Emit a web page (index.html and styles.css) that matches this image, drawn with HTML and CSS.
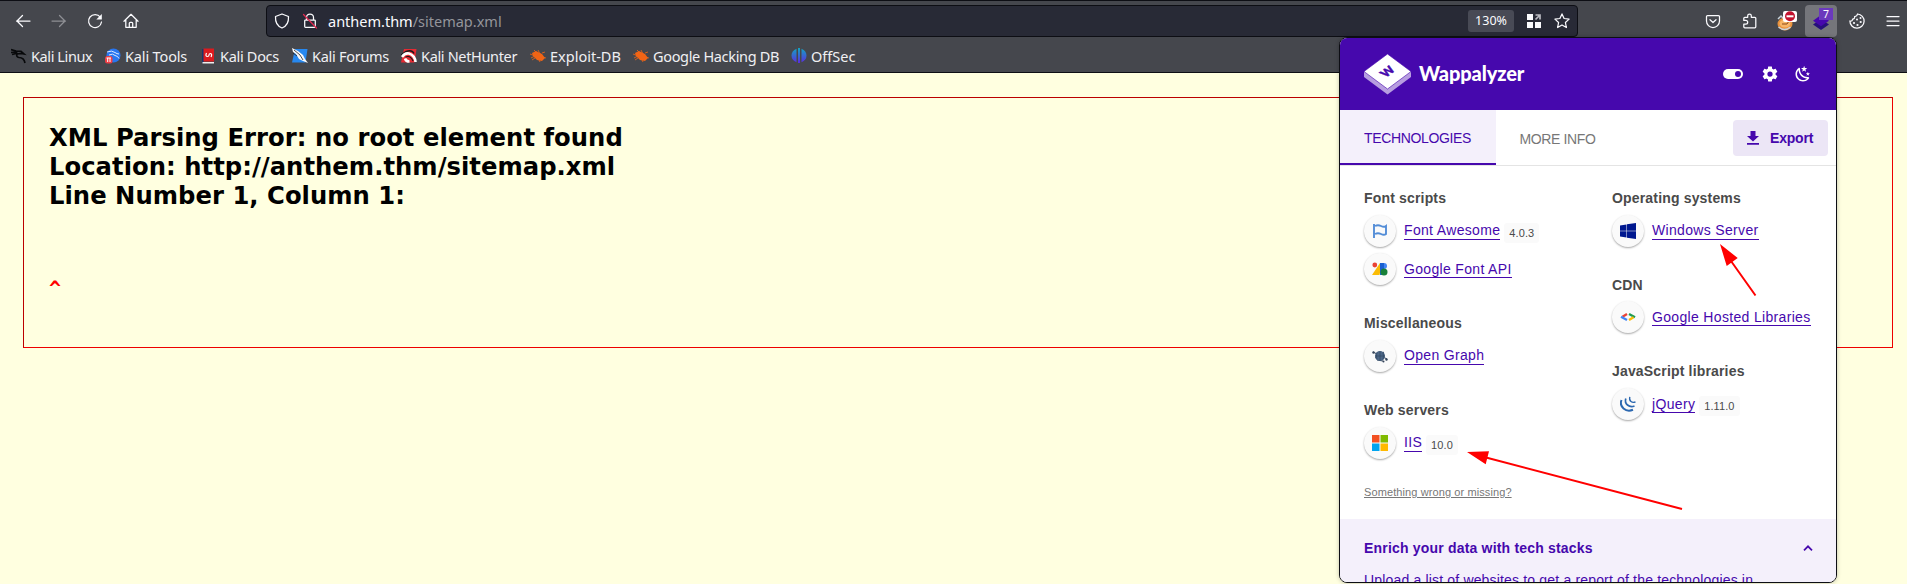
FILE: index.html
```html
<!DOCTYPE html>
<html lang="en">
<head>
<meta charset="utf-8">
<title>sitemap.xml</title>
<link rel="stylesheet" href="styles.css">
</head>
<body>
<div class="chrome">
  <div class="navbar">
    <div class="nav-buttons">
      <svg class="ic" viewBox="0 0 16 16"><path d="M15 8H1.500M7.500 2.500L2 8l5.500 5.500"/></svg>
      <svg class="ic dim" viewBox="0 0 16 16"><path d="M1 8h13.500M8.500 2.500L14 8l-5.500 5.500"/></svg>
      <svg class="ic" viewBox="0 0 16 16"><path d="M13.300 4.200A6.500 6.500 0 1 0 14.500 9"/><path d="M14.800 1v5.500H9.300z" fill="#fbfbfe" stroke="none"/></svg>
      <svg class="ic" viewBox="0 0 16 16"><path d="M1 8.300L8 1.300l7 7M2.800 7v7.300h10.400V7M6.300 14V10.300q0-1 1-1h1.400q1 0 1 1V14"/></svg>
    </div>
    <div class="urlbar">
      <svg class="ic shield" viewBox="0 0 16 16"><path d="M8 1l6.500 2.500c.3 5-1.500 9.500-6.500 11.500C3 13 1.200 8.500 1.500 3.500z"/></svg>
      <svg class="ic lock" viewBox="0 0 16 16"><path d="M4.500 7V4.500a3.500 3.500 0 0 1 7 0V7M3.500 7h9q.8 0 .8.800v5.700q0 .8-.8.800h-9q-.8 0-.8-.8V7.800q0-.8.8-.8z"/><path class="slash" d="M1.500 1.500l13 13.500"/></svg>
      <span class="url">anthem.thm<span class="path">/sitemap.xml</span></span>
      <span class="zoom">130%</span>
      <svg class="grid" viewBox="0 0 14 14"><path fill="#fbfbfe" d="M0 0h6v6H0zM0 8h6v6H0zM8 8h6v6H8z"/><path fill="none" stroke="#b9b9c0" stroke-width="1.700" d="M8.500 1H13v4.500M13 1L8.500 5.500"/></svg>
      <svg class="ic star" viewBox="0 0 16 16"><path d="M8 .9l2.100 4.600 5 .6-3.700 3.400 1 5L8 12l-4.400 2.500 1-5L.9 6.100l5-.6z"/></svg>
    </div>
    <div class="ext">
      <svg class="ic" viewBox="0 0 16 16"><path d="M2.500 2.500h11q1 0 1 1V8a6.500 6.500 0 0 1-13 0V3.500q0-1 1-1zM5 6.700l3 2.800 3-2.800"/></svg>
      <svg class="ic puzzle" viewBox="0 0 16 16"><path d="M1.800 6.800V5.300q0-1 1-1h2.900V2.800a1.800 1.800 0 0 1 3.600 0v1.500h3.500q1 0 1 1v8.500q0 1-1 1H2.800q-1 0-1-1v-2.600h2a1.900 1.900 0 0 0 0-3.800h-2z"/></svg>
      <svg class="fox" viewBox="0 0 20 22"><ellipse cx="8" cy="14" rx="7.500" ry="6.500" fill="#e8913c"/><ellipse cx="8" cy="13.500" rx="5.500" ry="4" fill="#f7b567"/><path d="M1 9l3-3 3 3M1.500 17q6 5 12 0" fill="none" stroke="#c9d3da" stroke-width="1.500"/><path d="M5 14h5l2-3" stroke="#8d4a1b" fill="none"/><rect x="6" y="1" width="14" height="11" rx="2" fill="#fff"/><circle cx="13" cy="6.300" r="5" fill="#c3122f"/><rect x="9.500" y="5.300" width="7" height="2" fill="#fff"/></svg>
      <div class="active-ext">
        <svg viewBox="0 0 18 16"><path fill="#26107a" d="M9 5l8 5.500-8 5.500-8-5.500z"/><path fill="#4608ad" d="M9 1l8 5.800-8 5.500-8-5.500z"/></svg>
        <span class="badge">7</span>
      </div>
      <svg class="ic cookie" viewBox="0 0 16 16"><path d="M8.500 1A7.100 7.100 0 1 1 .9 8Q3.500 8.500 3.600 6 6 6 5.600 3.500 8 3.500 8.500 1z"/><g fill="#fbfbfe" stroke="none"><circle cx="8" cy="6.500" r="1"/><circle cx="11.500" cy="5" r="1"/><circle cx="11.700" cy="9" r="1.100"/><circle cx="5" cy="10" r="1.100"/><circle cx="8.500" cy="12" r="1.100"/></g></svg>
      <svg class="ic menu" viewBox="0 0 16 16"><path d="M2 3.500h12M2 8h12M2 12.500h12"/></svg>
    </div>
  </div>
  <div class="bookmarks">
    <div class="bm b1"><svg viewBox="0 0 16 16"><path fill="none" stroke="#08090b" stroke-width="1.700" d="M0 1.500l5 1.500 5 .3 3 2.700-3-.5-4 .5q-1 3 2 3.500 5 0 6 5.500M0 4.500l5-.5M1 6.500l4-1M5 3l1 3"/></svg><span>Kali Linux</span></div>
    <div class="bm b2"><svg viewBox="0 0 16 16"><circle cx="8.500" cy="7.500" r="7" fill="#2876f0"/><path fill="none" stroke="#dbe8ff" d="M2 4q5-2 8 .5 2 1.500 4 1.500M4 7q4-2 6 .5 3 .5 4 3"/><rect y="8" width="7.500" height="7.500" rx="2.500" fill="#ef3e45"/><path stroke="#fff" d="M1.500 10h4.500M2.700 10v4M5 10v4"/></svg><span>Kali Tools</span></div>
    <div class="bm b3"><svg viewBox="0 0 16 16"><path fill="#18376d" d="M2 1h2v14H2z"/><path fill="#dc1b1f" d="M3.500.5H14v13H3.500z"/><path fill="#eee" d="M2.500 14H14v1.500H2.500z"/><path fill="none" stroke="#fff" stroke-width="1.200" d="M6.500 5Q5 8.500 7.500 8.500 9 8.500 9 7t1.500-1.500Q12.500 6 11 9"/></svg><span>Kali Docs</span></div>
    <div class="bm b4"><svg viewBox="0 0 16 16"><path fill="#2788ef" d="M3 1h12.500l-2 13.500H0z"/><path fill="#f7f8fa" d="M0 0l6 3 5 4 2 4 3 4-5-2-4-2-3-5-3-2z"/><path stroke="#222" stroke-width=".8" fill="none" d="M2 2l6 5 3 5M1 5l4 3"/></svg><span>Kali Forums</span></div>
    <div class="bm b5"><svg viewBox="0 0 16 16"><path fill="#e52a33" d="M3 1h12.500l-2 13.500H0z"/><path fill="none" stroke="#16171a" stroke-width="1.400" d="M0 7l5-3.500q6-2 8 2"/><path fill="none" stroke="#fff" stroke-width="2.600" d="M1 9q3-4.500 7-3.500 6 2 6.500 8.500M4 10.500q1 3 4.500 3"/><path fill="none" stroke="#16171a" stroke-width="1.200" d="M4.500 9q5-2 7.500 4"/></svg><span>Kali NetHunter</span></div>
    <div class="bm b6"><svg viewBox="0 0 16 16"><path fill="#f26415" d="M2 5l4-2 6 3 3 4-3 3-5-1-4-4z"/><path fill="none" stroke="#f26415" stroke-width=".8" d="M0 6l5 2-4 2M4 2l3 3M8 2l2 4M12 5l3-1M12 9l4 1M9 12l1 2M5 10l-3 2"/></svg><span>Exploit-DB</span></div>
    <div class="bm b7"><svg viewBox="0 0 16 16"><path fill="#f26415" d="M2 5l4-2 6 3 3 4-3 3-5-1-4-4z"/><path fill="none" stroke="#f26415" stroke-width=".8" d="M0 6l5 2-4 2M4 2l3 3M8 2l2 4M12 5l3-1M12 9l4 1M9 12l1 2M5 10l-3 2"/></svg><span>Google Hacking DB</span></div>
    <div class="bm b8"><svg viewBox="0 0 16 16"><defs><linearGradient id="os" x2="0" y2="1"><stop stop-color="#11a6c2"/><stop offset="1" stop-color="#5b2be0"/></linearGradient></defs><path fill="url(#os)" d="M5.500.7v13.600Q.5 12 .5 7.500T5.500.7zM7 0h2v15H7zM10.500.7v13.600q5-2.300 5-6.800t-5-6.800z"/></svg><span>OffSec</span></div>
  </div>
</div>
<main class="page">
  <div class="error"><div class="msg">XML Parsing Error: no root element found<br>Location: http://anthem.thm/sitemap.xml<br>Line Number 1, Column 1:</div><div class="caret">^</div></div>
</main>
<aside class="popup">
  <header class="head">
    <svg class="logo" viewBox="0 0 47 41"><path fill="#b79de0" d="M0 18v5l23.500 17.500L47 23v-5z"/><path fill="#fff" stroke="#4608ad" stroke-width=".6" d="M23.500 0L47 17.500 23.500 35 0 17.500z"/><text class="logo-w" transform="matrix(.8 -.6 .8 .6 26.900 20.200)">W</text></svg>
    <span class="brand">Wappalyzer</span>
    <svg class="toggle" viewBox="0 0 20 10"><rect width="20" height="10" rx="5" fill="#fff"/><circle cx="15" cy="5" r="3" fill="#4608ad"/></svg>
    <svg class="gear" viewBox="0 0 24 24"><path fill="#fff" d="M12,15.500A3.500,3.500 0 0,1 8.500,12A3.500,3.500 0 0,1 12,8.500A3.500,3.500 0 0,1 15.500,12A3.500,3.500 0 0,1 12,15.500M19.430,12.970C19.470,12.650 19.500,12.330 19.500,12C19.500,11.670 19.470,11.340 19.430,11L21.540,9.370C21.730,9.220 21.780,8.950 21.660,8.730L19.660,5.270C19.540,5.050 19.270,4.960 19.050,5.050L16.560,6.050C16.040,5.660 15.500,5.320 14.870,5.070L14.500,2.420C14.460,2.180 14.250,2 14,2H10C9.750,2 9.540,2.180 9.500,2.420L9.130,5.070C8.500,5.320 7.960,5.660 7.440,6.050L4.950,5.050C4.730,4.960 4.460,5.050 4.340,5.270L2.340,8.730C2.210,8.950 2.270,9.220 2.460,9.370L4.570,11C4.530,11.340 4.500,11.670 4.500,12C4.500,12.330 4.530,12.650 4.570,12.970L2.460,14.630C2.270,14.780 2.210,15.050 2.340,15.270L4.340,18.730C4.460,18.950 4.730,19.030 4.950,18.950L7.440,17.940C7.960,18.340 8.500,18.680 9.130,18.930L9.500,21.580C9.540,21.820 9.750,22 10,22H14C14.250,22 14.460,21.820 14.500,21.580L14.870,18.930C15.500,18.670 16.040,18.340 16.560,17.940L19.050,18.950C19.270,19.030 19.540,18.950 19.660,18.730L21.660,15.270C21.780,15.050 21.730,14.780 21.540,14.630L19.430,12.970Z"/></svg>
    <svg class="moon" viewBox="0 0 24 24"><path fill="#fff" d="M17.750,4.090L15.220,6.030L16.130,9.090L13.500,7.280L10.870,9.090L11.780,6.030L9.250,4.090L12.440,4L13.500,1L14.560,4L17.750,4.090M21.250,11L19.610,12.250L20.200,14.230L18.500,13.060L16.800,14.230L17.390,12.250L15.750,11L17.810,10.950L18.500,9L19.190,10.950L21.250,11M18.970,15.950C19.800,15.870 20.690,17.050 20.160,17.800C19.840,18.250 19.500,18.670 19.080,19.070C15.170,23 8.840,23 4.940,19.070C1.030,15.170 1.030,8.830 4.940,4.930C5.340,4.530 5.760,4.170 6.210,3.850C6.960,3.320 8.140,4.210 8.060,5.040C7.790,7.900 8.750,10.870 10.950,13.060C13.140,15.260 16.100,16.220 18.970,15.950M17.330,17.970C14.500,17.810 11.700,16.640 9.530,14.500C7.360,12.310 6.200,9.500 6.040,6.680C3.230,9.820 3.340,14.640 6.350,17.660C9.370,20.670 14.190,20.780 17.330,17.970Z"/></svg>
  </header>
  <nav class="tabs">
    <div class="tab on">TECHNOLOGIES</div>
    <div class="tab">MORE INFO</div>
    <div class="export"><svg viewBox="0 0 12 14"><path fill="#4608ad" d="M3.500 0h5v5H12L6 10.500 0 5h3.500zM0 12h12v1.700H0z"/></svg><span>Export</span></div>
  </nav>
  <section class="cols">
    <div class="col">
      <div class="group"><h2>Font scripts</h2>
        <div class="item"><i><svg viewBox="0 0 16 16"><path fill="none" stroke="#538dd7" stroke-width="1.900" d="M2 1v14M3 3q3-1.500 6 0t5 0v8q-2 1.500-5 0t-6 0"/></svg></i><a>Font Awesome</a><b>4.0.3</b></div>
        <div class="item"><i><svg viewBox="0 0 16 16"><circle cx="2.800" cy="4" r="2.400" fill="#ea4335"/><path fill="#fbbc04" d="M8 2h2L7.500 14H0z"/><path fill="#1a5fd0" d="M8 2h4v12H8z"/><path fill="#4285f4" d="M12 2q3 .2 3 3t-3 3z"/><circle cx="12" cy="11" r="3.500" fill="#188038"/></svg></i><a>Google Font API</a></div>
      </div>
      <div class="group"><h2>Miscellaneous</h2>
        <div class="item"><i><svg viewBox="0 0 16 16"><path fill="none" stroke="#34445a" d="M1 4l14 7M3 10l9-6M5 12l6 1"/><circle cx="8" cy="8" r="5" fill="#4d6787"/><path fill="none" stroke="#304862" stroke-width=".7" d="M3 8h10M8 3v10M5 4.500q-1 3.500 0 7M11 4.500q1 3.500 0 7"/><circle cx="1.500" cy="4.500" r="1.200" fill="#34445a"/><circle cx="14.500" cy="11.500" r="1.200" fill="#34445a"/><circle cx="11.500" cy="13.500" r="1" fill="#34445a"/></svg></i><a>Open Graph</a></div>
      </div>
      <div class="group"><h2>Web servers</h2>
        <div class="item"><i><svg viewBox="0 0 16 16"><path fill="#f25022" d="M0 0h7.500v7.500H0z"/><path fill="#7fba00" d="M8.500 0H16v7.500H8.500z"/><path fill="#00a4ef" d="M0 8.500h7.500V16H0z"/><path fill="#ffb900" d="M8.500 8.500H16V16H8.500z"/></svg></i><a>IIS</a><b>10.0</b></div>
      </div>
    </div>
    <div class="col">
      <div class="group"><h2>Operating systems</h2>
        <div class="item"><i><svg viewBox="0 0 16 16"><path fill="#00188f" d="M0 2.400l6.500-1v6.300H0zM7 1.300L16 0v7.700H7zM0 8.200h6.500v6.300l-6.500-1zM7 8.200h9V16l-9-1.300z"/></svg></i><a>Windows Server</a></div>
      </div>
      <div class="group"><h2>CDN</h2>
        <div class="item"><i><svg viewBox="0 0 16 16" fill="none" stroke-width="2.300"><path stroke="#ea4335" d="M7 5L2.500 7.800"/><path stroke="#4285f4" d="M1 7.700L7 11"/><path stroke="#1e9c54" d="M9 5l6 3.300"/><path stroke="#fbbc05" d="M13.500 8.300L9 11"/></svg></i><a>Google Hosted Libraries</a></div>
      </div>
      <div class="group"><h2>JavaScript libraries</h2>
        <div class="item"><i><svg viewBox="0 0 16 16" fill="none" stroke="#2c68b0"><path stroke-width="2" d="M1.500 4Q-.5 9 3.500 12.500t9.500 1.300"/><path stroke-width="1.700" d="M5.800 2.500Q4.500 6.500 7.500 9t7 1"/><path stroke-width="1.300" d="M9.800.8Q9 4 11 5.500t4.500.3"/></svg></i><a>jQuery</a><b>1.11.0</b></div>
      </div>
    </div>
  </section>
  <div class="wrong"><a>Something wrong or missing?</a></div>
  <section class="enrich">
    <div class="enrich-head"><strong>Enrich your data with tech stacks</strong><svg viewBox="0 0 10 6"><path fill="none" stroke="#4608ad" stroke-width="1.700" d="M1 5.300L5 1.300l4 4"/></svg></div>
    <p>Upload a list of websites to get a report of the technologies in</p>
  </section>
</aside>
<svg class="arrows" viewBox="0 0 1907 584"><path fill="none" stroke="#f00" stroke-width="2" d="M1755.500 295.500L1731 261M1682 509L1486 457.500"/><path fill="#f00" d="M1720 244l17.700 14-11 8zM1467 452l22-.800-3.300 13z"/></svg>
</body>
</html>
```

FILE: styles.css
```css
* { box-sizing: border-box; }
body {
  margin: 0;
  width: 1907px;
  height: 584px;
  overflow: hidden;
  position: relative;
  background: #ffffe0;
  font-family: "Noto Sans", sans-serif;
}
svg { display: block; flex: none; }

/* Browser toolbar */
.chrome {
  height: 73px;
  background: #45474d;
  border-top: 1px solid #0d0e14;
  border-bottom: 1px solid #0d0e14;
  color: #fbfbfe;
}
.navbar { display: flex; height: 40px; align-items: center; }
.nav-buttons { display: flex; gap: 20px; width: 266px; padding-left: 15px; }
.ic { width: 16px; height: 16px; fill: none; stroke: #fbfbfe; stroke-width: 1.25; stroke-linecap: round; stroke-linejoin: round; }
.dim { opacity: .4; }
.urlbar {
  display: flex;
  align-items: center;
  width: 1312px;
  height: 32px;
  padding: 0 7px 0 7px;
  border: 1px solid #0d0e14;
  border-radius: 4px;
  background: #282a36;
}
.lock { margin-left: 12px; }
.slash { stroke: #e22850; }
.url { flex: 1; margin-left: 10px; font-size: 14.5px; }
.path { color: #94959b; }
.zoom { width: 46px; height: 22px; line-height: 22px; border-radius: 3px; background: #484a55; font-size: 12.5px; text-align: center; margin-right: 13px; }
.grid { width: 14px; height: 14px; margin-right: 13px; }
.ext { display: flex; align-items: center; flex: 1; }
.ext > :first-child { margin-left: 127px; }
.puzzle { margin-left: 21px; }
.fox { width: 20px; height: 22px; margin-left: 19px; }
.active-ext { position: relative; width: 32px; height: 32px; margin-left: 8px; padding: 9px 0 0 7px; border-radius: 4px; background: #75767b; }
.active-ext svg { width: 18px; height: 16px; }
.badge { position: absolute; left: 14px; top: 3px; width: 14px; height: 12px; background: #6b39bd; font-size: 10.5px; line-height: 12px; text-align: center; }
.cookie { margin-left: 12px; }
.menu { margin-left: 20px; }
.bookmarks { display: flex; height: 31px; align-items: center; padding: 0 0 1px 11px; font-size: 14.5px; color: #f0f0f3; }
.bm { display: flex; align-items: center; gap: 4px; white-space: nowrap; }
.bm svg { width: 16px; height: 16px; }
.b1 { width: 94px; letter-spacing: -.4px; }
.b2 { width: 95px; letter-spacing: -.15px; }
.b3 { width: 92px; letter-spacing: -.3px; }
.b4 { width: 109px; letter-spacing: -.28px; }
.b5 { width: 129px; letter-spacing: -.34px; }
.b6 { width: 103px; }
.b7 { width: 158px; letter-spacing: -.33px; }

/* XML error page */
.page { padding: 24px 14px 0 23px; }
.error { height: 251px; padding: 25px 25px 0; border: 1px solid #b00; border-bottom-color: #e00; border-right-color: #e00; font: bold 24.27px/29px "DejaVu Sans", sans-serif; letter-spacing: .03px; }
.caret { margin-top: 64px; color: #f00; font: bold 20px/29px "DejaVu Sans Mono", monospace; }

/* Extension popup */
.popup {
  position: absolute;
  left: 1339px;
  top: 37px;
  width: 498px;
  height: 546px;
  border: 1px solid #0d0e14;
  border-radius: 8px;
  overflow: hidden;
  background: #fff;
  font-family: "Liberation Sans", Arial, sans-serif;
  color: #4608ad;
  box-shadow: 0 0 4px rgba(0, 0, 0, .25);
}
.head { display: flex; align-items: center; height: 72px; padding: 0 24px; background: #4608ad; color: #fff; }
.logo { width: 47px; height: 41px; }
.logo-w { font: 900 12px Lato, sans-serif; fill: #4608ad; stroke: #4608ad; stroke-width: .5; text-anchor: middle; }
.brand { flex: 1; margin: -3px 0 0 8px; font: 900 20px/24px Lato, sans-serif; letter-spacing: -.1px; }
.toggle { width: 20px; height: 10px; }
.gear { width: 18px; height: 18px; margin-left: 18px; }
.moon { width: 18px; height: 18px; margin-left: 15px; }
.tabs { display: flex; height: 56px; border-bottom: 1px solid #e4e4e4; font-size: 14px; letter-spacing: -.36px; }
.tab { padding: 0 23.5px; line-height: 59px; color: #777; }
.tab.on { width: 156px; height: 55px; padding-left: 24px; line-height: 57px; background: #f4f0fb; border-bottom: 2px solid #4608ad; color: #4608ad; }
.export { display: flex; align-items: center; gap: 11px; width: 95px; height: 36px; margin: 10px 8px 0 auto; padding-left: 14px; border-radius: 4px; background: #ece6f6; font-weight: bold; letter-spacing: -.2px; }
.export svg { width: 12px; height: 14px; }
.cols { display: flex; padding: 22px 24px 0; height: 305px; }
.col { width: 248px; flex: none; }
.group { margin-bottom: 24.7px; }
h2 { margin: 0 0 3.5px; font-size: 14px; line-height: 20px; letter-spacing: .17px; color: #4a4a4a; }
.item { display: flex; align-items: center; height: 38.5px; white-space: nowrap; }
.item i { display: flex; align-items: center; justify-content: center; width: 32px; height: 32px; border-radius: 50%; background: #fafafa; box-shadow: 0 1px 2px rgba(0, 0, 0, .35); }
.item i svg { width: 16px; height: 16px; }
.item a { margin: 1.5px 0 0 8px; border-bottom: 1px solid #4608ad; font-size: 14px; line-height: 15.5px; letter-spacing: .33px; }
.item b { margin: 4px 0 0 4px; padding: 0 5px; border-radius: 3px; background: #fafafa; color: #4a4a4a; font-weight: normal; font-size: 11px; line-height: 20px; letter-spacing: .1px; }
.wrong { height: 48px; padding: 14px 24px 0; color: #777; font-size: 11px; line-height: 14px; letter-spacing: .1px; text-decoration: underline; }
.enrich { height: 80px; padding: 18px 24px 0; background: #f4f0fb; font-size: 14px; letter-spacing: .17px; }
.enrich-head { display: flex; justify-content: space-between; align-items: center; line-height: 22px; margin-right: -1px; letter-spacing: .19px; }
.enrich-head svg { width: 10px; height: 6px; }
.enrich p { margin: 11px 0 0; line-height: 20px; white-space: nowrap; }

/* Annotation arrows drawn over the popup */
.arrows { position: absolute; left: 0; top: 0; width: 1907px; height: 584px; }
```
